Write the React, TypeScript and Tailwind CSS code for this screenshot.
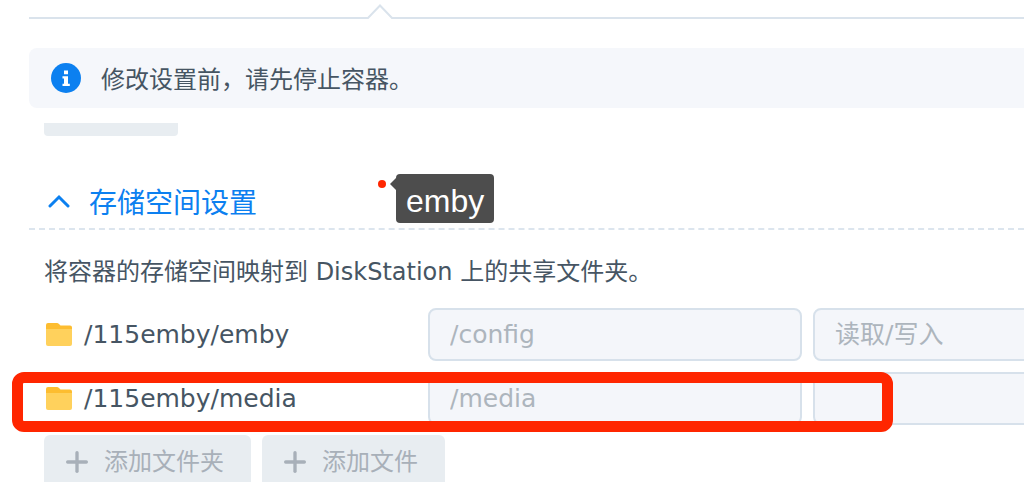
import { Plus } from "lucide-react"

const volumes = [
  { folder: "/115emby/emby", mount: "/config", mode: "读取/写入", marked: false },
  { folder: "/115emby/media", mount: "/media", mode: "", marked: true },
]

const FolderIcon = () => (
  <svg width="26" height="23" viewBox="0 0 26 23" className="shrink-0" aria-hidden="true">
    <path d="M0 2Q0 0 2 0H11Q12 0 13 1L14.5 2.5H24Q26 2.5 26 4.5V12H0Z" fill="#fdbd30" />
    <path d="M0 6H26V21Q26 23 24 23H2Q0 23 0 21Z" fill="#ffd15c" />
  </svg>
)

const InfoIcon = () => (
  <svg width="30" height="30" viewBox="0 0 30 30" className="shrink-0" aria-hidden="true">
    <circle cx="15" cy="15" r="15" fill="#0c80f0" />
    <path d="M13 7.5h4v3.8h-4zM11.5 13.3H17v7.5h1.8v2.2h-7.3v-2.2H13v-5.3h-1.5z" fill="#fff" />
  </svg>
)

const TabLine = () => (
  <div className="ml-[29px] flex h-5 items-end">
    <div className="mb-px h-0.5 w-[338px] bg-[#dae3ec]" />
    <svg width="26" height="16" viewBox="0 0 26 16" className="shrink-0" aria-hidden="true">
      <path d="M0 14H1L13 1.5L25 14H26" fill="none" stroke="#dae3ec" strokeWidth="2" />
    </svg>
    <div className="mb-px h-0.5 flex-1 bg-[#dae3ec]" />
  </div>
)

const Tooltip = ({ label }: { label: string }) => (
  <div className="absolute left-[378px] top-[-9px] flex items-start">
    <span className="mt-[6px] h-2 w-2 rounded-full bg-[#ff2600]" />
    <svg width="6" height="14" viewBox="0 0 6 14" className="ml-1 mt-[3px]" aria-hidden="true">
      <path d="M6 1V13L0 7Z" fill="#4d4d4d" />
    </svg>
    <span className="flex h-[49px] items-center rounded-sm bg-[#4d4d4d] px-[10px] pt-1 font-['Liberation_Sans',sans-serif] text-[32px] leading-none text-white">
      {label}
    </span>
  </div>
)

const App = () => {
  const field =
    "h-[53px] w-full appearance-none rounded-lg border-2 border-[#d7e1eb] bg-[#f4f6fa] px-5 text-[25px] text-[#adb5bd] opacity-100"

  return (
    <main className="overflow-hidden bg-white font-['DejaVu_Sans','Noto_Sans_CJK_SC',sans-serif] text-2xl text-[#465563]">
      <TabLine />

      <div className="ml-[29px] mt-7 flex h-[60px] items-center gap-5 rounded-l-lg bg-[#f5f7fb] pl-[22px]">
        <InfoIcon />
        <p className="font-['Noto_Sans_CJK_SC',sans-serif]">修改设置前，请先停止容器。</p>
      </div>

      <div className="ml-11 mt-[15px] h-[13px] w-[134px] rounded-b bg-[#e8edf1]" />

      <section>
        <div className="relative mt-[47px]">
          <h2 className="ml-[29px] flex h-[47px] border-b-2 border-dashed border-[#dce5ee]">
            <button
              type="button"
              aria-expanded="true"
              className="flex h-[35px] items-center gap-[19px] pl-[19px] font-['Noto_Sans_CJK_SC',sans-serif] text-[28px] leading-none text-[#0c80f0]"
            >
              <svg width="22" height="14" viewBox="0 0 22 14" aria-hidden="true">
                <path
                  d="M2 12L11 3L20 12"
                  fill="none"
                  stroke="currentColor"
                  strokeWidth="3"
                  strokeLinecap="round"
                />
              </svg>
              存储空间设置
            </button>
          </h2>
          <Tooltip label="emby" />
        </div>

        <p className="ml-11 mt-6 leading-9">将容器的存储空间映射到 DiskStation 上的共享文件夹。</p>

        <div className="ml-11 mt-[18px] flex flex-col gap-[11px]">
          {volumes.map((volume) => (
            <div
              key={volume.folder}
              className="relative -mr-4 grid grid-cols-[minmax(0,384fr)_minmax(0,374fr)_minmax(0,238fr)]"
            >
              <label htmlFor={volume.mount} className="flex items-center gap-3 pl-0.5 text-[25px]">
                <FolderIcon />
                {volume.folder}
              </label>
              <input id={volume.mount} className={field} defaultValue={volume.mount} disabled />
              <div className="pl-[11px]">
                <select aria-label={volume.folder} className={field} disabled>
                  <option>{volume.mode}</option>
                </select>
              </div>
              {volume.marked && (
                <div className="pointer-events-none absolute -left-8 right-[147px] top-0 h-[60px] rounded-xl border-[11px] border-[#ff2600]" />
              )}
            </div>
          ))}
        </div>

        <div className="ml-11 mt-[10px] flex gap-[11px] pb-4">
          {["添加文件夹", "添加文件"].map((label) => (
            <button
              key={label}
              type="button"
              disabled
              className="flex h-[47px] items-center gap-[11px] rounded-t-md bg-[#e8edf1] pl-[17px] pr-[27px] pt-1.5 text-[#a8b0b9]"
            >
              <Plus size={32} strokeWidth={2.5} />
              {label}
            </button>
          ))}
        </div>
      </section>
    </main>
  )
}

export default App
